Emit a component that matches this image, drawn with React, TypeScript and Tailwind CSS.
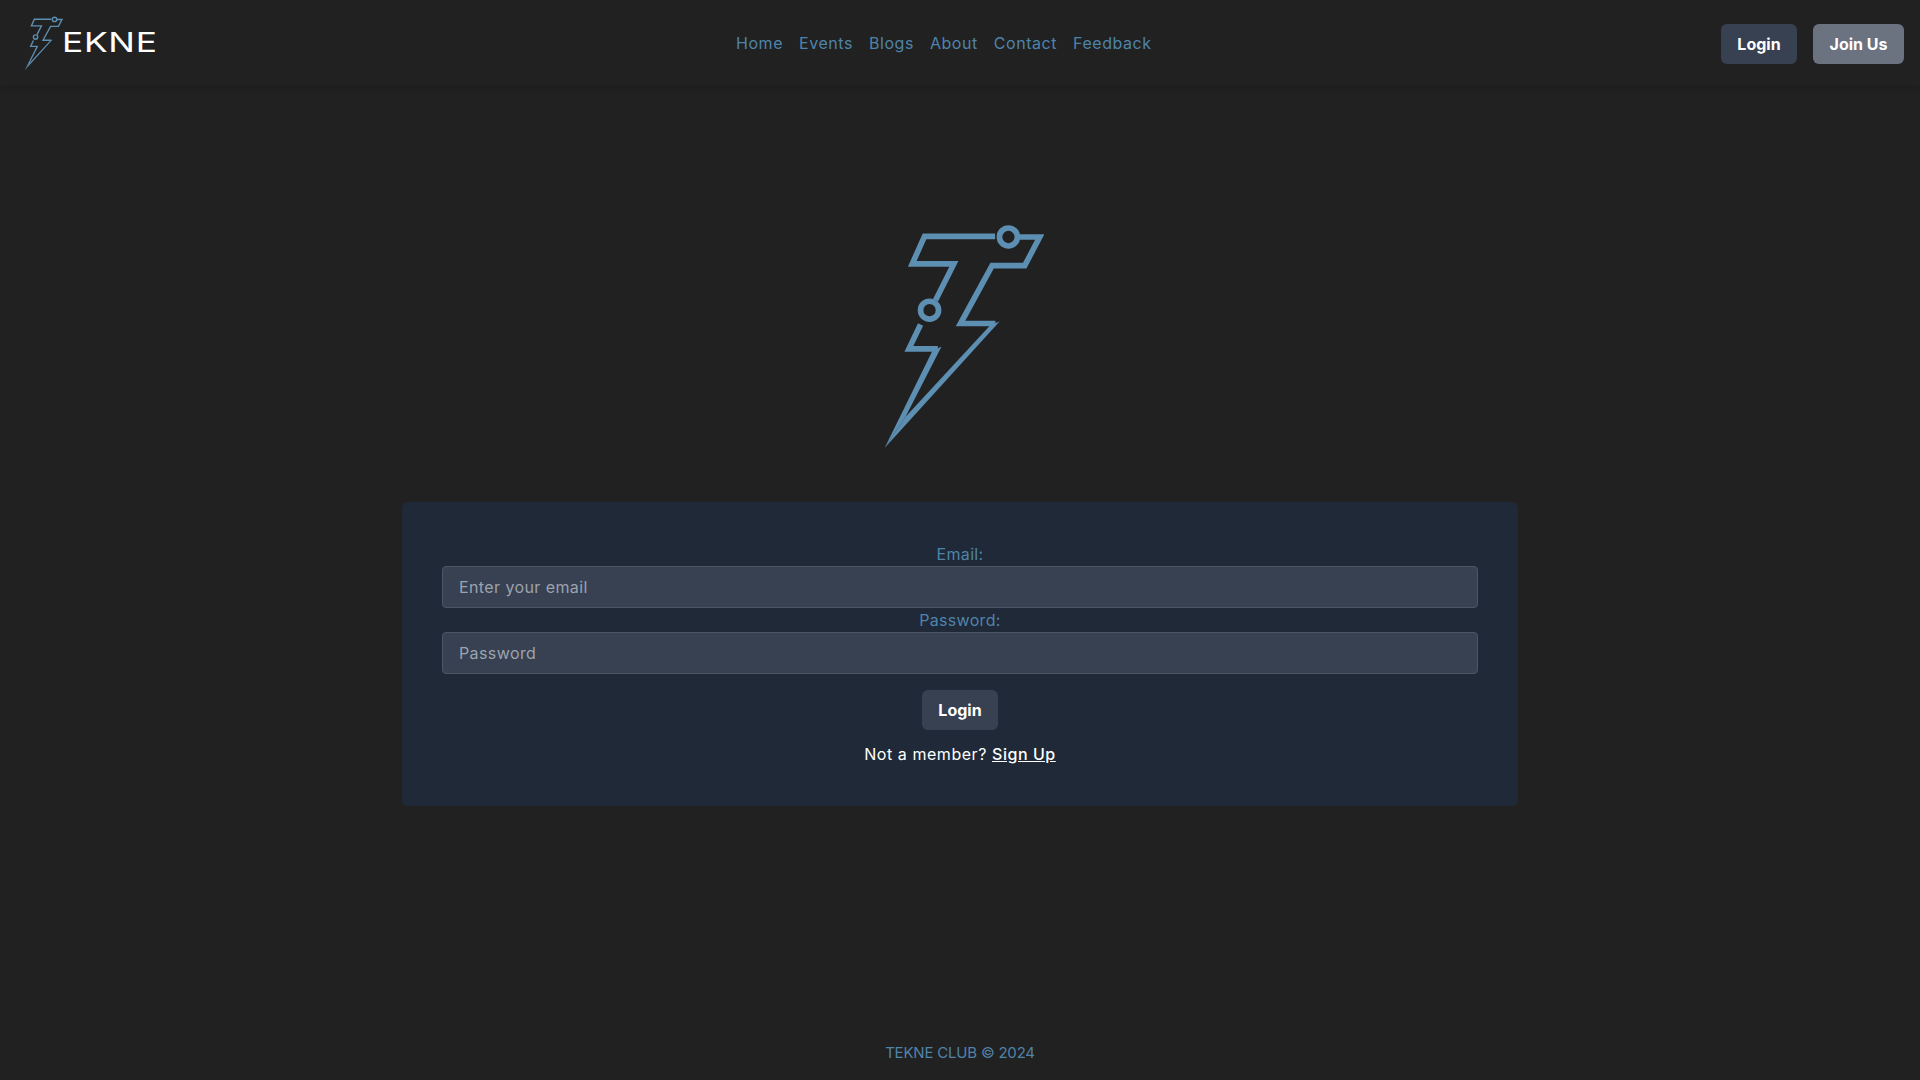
const navLinks = ['Home', 'Events', 'Blogs', 'About', 'Contact', 'Feedback']

function BoltMark({ className, strokeWidth }: { className: string; strokeWidth: number }) {
  return (
    <svg viewBox="50 40 500 685" className={className} fill="none" stroke="#5d8fb2" strokeWidth={strokeWidth} strokeLinejoin="miter">
      <path d="M404 80H192L155 163H280L225 272" />
      <circle cx="207" cy="302" r="27" />
      <circle cx="444" cy="82" r="27" />
      <path d="M474 82H538L493 168H395L300 342H405" />
      <path d="M180 345L145 418H232" />
      {/* tapered legs of the bolt, they meet in the tip */}
      <path d="M215 425L243 411L135 622L72 716Z" fill="#5d8fb2" stroke="none" />
      <path d="M418 335L388 349L135 622L72 716Z" fill="#5d8fb2" stroke="none" />
    </svg>
  )
}

function Field({ label, placeholder, type }: { label: string; placeholder: string; type: string }) {
  return (
    <label className="block text-center text-[16px] leading-6 tracking-[0.3px] text-[#4f84aa]">
      {label}
      <input
        type={type}
        placeholder={placeholder}
        className="block w-full h-[42px] rounded-[4px] border border-[#4b5563] bg-[#374151] px-4 text-left text-[16px] tracking-[0.4px] text-white placeholder:text-[#9ca3af] outline-none"
      />
    </label>
  )
}

export default function App() {
  return (
    <div className="min-h-screen flex flex-col bg-[#212121] font-['Inter',sans-serif]">
      <header className="h-[86px] flex items-center justify-between px-4 shadow-[0_2px_6px_rgba(0,0,0,0.15)]">
        <div className="w-[150px] h-[86px] flex items-center">
          <BoltMark className="w-[40px] h-[55px] ml-[7px] shrink-0" strokeWidth={17} />
          <span className="ml-[-1px] origin-left scale-x-[1.31] text-[27px] leading-none font-normal tracking-[0.5px] text-white mt-[-2px]">EKNE</span>
        </div>
        <nav className="flex gap-4 w-[415px]">
          {navLinks.map((link) => (
            <a key={link} href="#" className="text-[16px] leading-6 tracking-[0.55px] text-[#4f84aa]">
              {link}
            </a>
          ))}
        </nav>
        <div className="flex gap-4 mt-[2px]">
          <button className="h-10 w-[76px] rounded-[6px] bg-[#374151] text-[16px] font-bold text-white">Login</button>
          <button className="h-10 w-[91px] rounded-[6px] bg-[#6b7280] text-[16px] font-bold text-white">Join Us</button>
        </div>
      </header>

      <main className="flex-1 flex flex-col items-center pt-[137px]">
        <BoltMark className="w-[167px] h-[228px]" strokeWidth={17} />
        <form className="mt-[51px] w-[1116px] rounded-[6px] bg-[#1f2937] p-10 flex flex-col items-center">
          <div className="w-full">
            <Field label="Email:" placeholder="Enter your email" type="email" />
            <Field label="Password:" placeholder="Password" type="password" />
          </div>
          <button type="button" className="mt-4 h-10 w-[76px] rounded-[6px] bg-[#374151] text-[16px] font-bold text-white">
            Login
          </button>
          <p className="mt-3 text-[16px] leading-6 tracking-[0.55px] text-white">
            Not a member?{' '}
            <a href="#" className="font-medium underline">
              Sign Up
            </a>
          </p>
        </form>
      </main>

      <footer className="h-[56px] pt-[2px] flex items-center justify-center text-[15px] tracking-[-0.2px] text-[#4f84aa]">TEKNE CLUB © 2024</footer>
    </div>
  )
}
